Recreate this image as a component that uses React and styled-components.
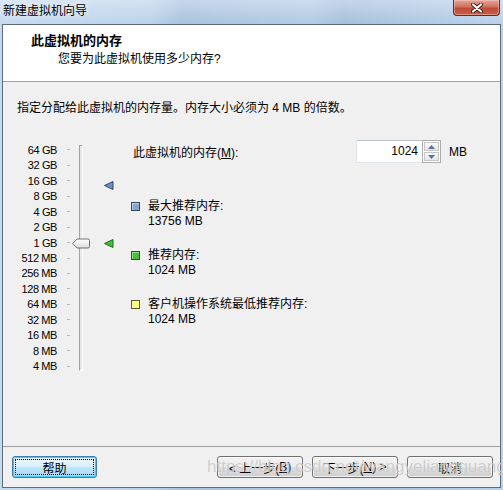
import React from "react"
import styled, { createGlobalStyle } from "styled-components"

const GlobalStyle = createGlobalStyle`
  html, body {
    margin: 0;
    padding: 0;
    background: #c3d7ee;
  }
  body {
    font-family: "Liberation Sans", "Noto Sans CJK SC", sans-serif;
    font-size: 12px;
    color: #000;
  }
`

const ROW_H = 15.45
const SCALE = ["64 GB", "32 GB", "16 GB", "8 GB", "4 GB", "2 GB", "1 GB", "512 MB", "256 MB", "128 MB", "64 MB", "32 MB", "16 MB", "8 MB", "4 MB"]
const FIRST = 10
const posOf = mb => FIRST + Math.log2(65536 / mb) * ROW_H

const legend = [
  { color: "#8aa5cd", border: "#33475f", label: "最大推荐内存:", value: "13756 MB" },
  { color: "#45c23a", border: "#1f5a1a", label: "推荐内存:", value: "1024 MB" },
  { color: "#ffff78", border: "#5c5c2a", label: "客户机操作系统最低推荐内存:", value: "1024 MB" },
]

const App = () => {
  return (
    <>
      <GlobalStyle />
      <Window>
        <TitleBar>
          <span className="caption">新建虚拟机向导</span>
          <CloseButton>
            <svg width="12" height="10" viewBox="0 0 12 10">
              <path d="M2 1.5 L10 8.5 M10 1.5 L2 8.5" stroke="#3b1c18" strokeWidth="4" strokeLinecap="round" />
              <path d="M2 1.5 L10 8.5 M10 1.5 L2 8.5" stroke="#fff" strokeWidth="2.2" strokeLinecap="round" />
            </svg>
          </CloseButton>
        </TitleBar>

        <Client>
          <Header>
            <h1>此虚拟机的内存</h1>
            <p>您要为此虚拟机使用多少内存?</p>
          </Header>

          <Body>
            <Intro>指定分配给此虚拟机的内存量。内存大小必须为 4 MB 的倍数。</Intro>
            <Main>
              <Scale>
                <Labels>
                  {SCALE.map(s => (
                    <ScaleRow key={s}>
                      <span>{s}</span>
                      <Tick />
                    </ScaleRow>
                  ))}
                </Labels>
                <TrackCol>
                  <Groove />
                  <Thumb style={{ top: posOf(1024) - 5 }}>
                    <svg width="18" height="11" viewBox="0 0 18 11">
                      <defs>
                        <linearGradient id="th" x1="0" y1="0" x2="0" y2="1">
                          <stop offset="0" stopColor="#ffffff" />
                          <stop offset="1" stopColor="#dcdcdc" />
                        </linearGradient>
                      </defs>
                      <path d="M0.5 5.5 L5 1 H16 Q17.5 1 17.5 2.5 V8.5 Q17.5 10 16 10 H5 Z" fill="url(#th)" stroke="#707070" />
                    </svg>
                  </Thumb>
                </TrackCol>
                <MarkerCol>
                  <Marker style={{ top: posOf(13756) - 4 }}>
                    <svg width="10" height="9" viewBox="0 0 10 9">
                      <path d="M0.5 4.5 L9 0.5 V8.5 Z" fill="#6f8fca" stroke="#2c4476" />
                    </svg>
                  </Marker>
                  <Marker style={{ top: posOf(1024) - 4 }}>
                    <svg width="10" height="9" viewBox="0 0 10 9">
                      <path d="M0.5 4.5 L9 0.5 V8.5 Z" fill="#3fc23a" stroke="#1d6a18" />
                    </svg>
                  </Marker>
                </MarkerCol>
              </Scale>

              <Panel>
                <MemRow>
                  <label>
                    此虚拟机的内存(<u>M</u>):
                  </label>
                  <SpinBox>
                    <SpinField>1024</SpinField>
                    <SpinButtons>
                      <SpinBtn $up>
                        <svg width="7" height="4" viewBox="0 0 7 4">
                          <path d="M0 4 L3.5 0 L7 4 Z" fill="#5e6f9a" />
                        </svg>
                      </SpinBtn>
                      <SpinBtn>
                        <svg width="7" height="4" viewBox="0 0 7 4">
                          <path d="M0 0 L3.5 4 L7 0 Z" fill="#5e6f9a" />
                        </svg>
                      </SpinBtn>
                    </SpinButtons>
                  </SpinBox>
                  <span className="unit">MB</span>
                </MemRow>

                <Legend>
                  {legend.map(l => (
                    <LegendItem key={l.label}>
                      <Swatch $color={l.color} $border={l.border} />
                      <div>
                        <div>{l.label}</div>
                        <div>{l.value}</div>
                      </div>
                    </LegendItem>
                  ))}
                </Legend>
              </Panel>
            </Main>
          </Body>

          <Footer>
            <Button $focused>帮助</Button>
            <div className="nav">
              <Button>&lt; 上一步(<u>B</u>)</Button>
              <Button>下一步(<u>N</u>) &gt;</Button>
              <Button>取消</Button>
            </div>
            <Watermark>https://blog.csdn.net/wangyeliangguang</Watermark>
          </Footer>
        </Client>
      </Window>
    </>
  )
}

export default App

const Window = styled.div`
  width: 503px;
  height: 490px;
  display: flex;
  flex-direction: column;
  background:
    linear-gradient(180deg, rgba(255, 255, 255, 0.35) 0%, rgba(255, 255, 255, 0) 24px),
    linear-gradient(90deg, #c6d9ee 0%, #bcd2ea 30%, #a9c2de 36%, #b3cae5 62%, #a6bfdc 68%, #bad1ea 100%);
  overflow: hidden;
`

const TitleBar = styled.div`
  height: 24px;
  flex: none;
  display: flex;
  justify-content: space-between;
  align-items: flex-start;
  padding: 0 3px 0 3px;

  .caption {
    line-height: 22px;
    font-size: 12px;
    color: #000;
    text-shadow: 0 0 6px rgba(255, 255, 255, 0.9);
  }
`

const CloseButton = styled.div`
  width: 45px;
  height: 15px;
  display: flex;
  align-items: center;
  justify-content: center;
  border: 1px solid #5a2f2a;
  border-top: none;
  border-radius: 0 0 4px 4px;
  background: linear-gradient(180deg, #e3a79a 0%, #d0705e 45%, #c04a35 55%, #c8604a 100%);
  box-shadow: inset 0 0 0 1px rgba(255, 210, 200, 0.45);
`

const Client = styled.div`
  flex: 1;
  margin: 0 2px 2px 2px;
  border: 1px solid #5d6b7d;
  background: #f0f0f0;
  display: flex;
  flex-direction: column;
`

const Header = styled.div`
  height: 57px;
  box-sizing: border-box;
  flex: none;
  background: #fff;
  border-bottom: 1px solid #a0a0a0;
  padding: 8px 0 0 28px;

  h1 {
    margin: 0;
    font-size: 13px;
    font-weight: bold;
    line-height: 16px;
  }

  p {
    margin: 2px 0 0 27px;
    line-height: 16px;
  }
`

const Body = styled.div`
  flex: 1;
  padding: 18px 0 0 14px;
`

const Intro = styled.div`
  line-height: 16px;
`

const Main = styled.div`
  display: flex;
  margin-top: 24px;
`

const Scale = styled.div`
  display: flex;
`

const Labels = styled.div`
  padding-top: ${FIRST - ROW_H / 2}px;
`

const ScaleRow = styled.div`
  height: ${ROW_H}px;
  display: grid;
  grid-template-columns: 40px 3px;
  column-gap: 10px;
  align-items: center;

  span {
    text-align: right;
    font-size: 11px;
    letter-spacing: -0.4px;
    white-space: nowrap;
  }
`

const Tick = styled.div`
  height: 1px;
  background: #b8b8b8;
`

const TrackCol = styled.div`
  position: relative;
  width: 18px;
  margin-left: 2px;
`

const Groove = styled.div`
  width: 2px;
  height: 224px;
  margin: 5px 0 0 7px;
  background: #e8e8e8;
  border-left: 1px solid #a2a2a2;
  border-top: 1px solid #a2a2a2;
  border-right: 1px solid #ffffff;
  border-bottom: 1px solid #ffffff;
`

const Thumb = styled.div`
  position: absolute;
  left: 0;
  height: 11px;

  svg {
    display: block;
  }
`

const MarkerCol = styled.div`
  position: relative;
  width: 10px;
  margin-left: 14px;
`

const Marker = styled.div`
  position: absolute;
  left: 0;

  svg {
    display: block;
  }
`

const Panel = styled.div`
  margin-left: 17px;
  display: flex;
  flex-direction: column;
`

const MemRow = styled.div`
  display: grid;
  grid-template-columns: 225px 85px auto;
  align-items: center;
  height: 23px;

  label {
    padding-left: 2px;
  }

  .unit {
    margin-left: 8px;
  }
`

const SpinBox = styled.div`
  display: flex;
  height: 23px;
`

const SpinField = styled.div`
  flex: 1;
  background: #fff;
  border: 1px solid #dfe4ea;
  border-top-color: #bcc3cb;
  border-right: none;
  border-radius: 2px 0 0 2px;
  text-align: right;
  padding-right: 4px;
  line-height: 21px;
`

const SpinButtons = styled.div`
  width: 17px;
  display: flex;
  flex-direction: column;
  border: 1px solid #acacac;
  background: #fff;
`

const SpinBtn = styled.div`
  flex: 1;
  display: flex;
  align-items: center;
  justify-content: center;
  margin: 1px;
  ${p => (p.$up ? "margin-bottom: 0;" : "")}
  border: 1px solid #c6c6c6;
  background: linear-gradient(180deg, #fafafa 0%, #e6e6e6 100%);

  svg {
    display: block;
  }
`

const Legend = styled.div`
  margin-top: 36px;
  display: flex;
  flex-direction: column;
  gap: 19px;
`

const LegendItem = styled.div`
  display: grid;
  grid-template-columns: 9px auto;
  column-gap: 8px;
  line-height: 15px;
`

const Swatch = styled.div`
  width: 7px;
  height: 7px;
  margin-top: 3px;
  background: ${p => p.$color};
  border: 1px solid ${p => p.$border};
  box-shadow: inset 1px 1px 0 rgba(255, 255, 255, 0.45);
`

const Footer = styled.div`
  position: relative;
  height: 31px;
  flex: none;
  border-top: 1px solid #a0a0a0;
  padding: 9px 7px 0 9px;
  display: flex;
  justify-content: space-between;
  align-items: flex-start;

  .nav {
    display: flex;
    gap: 9px;
  }
`

const Button = styled.div`
  width: ${p => (p.$focused ? "85px" : "86px")};
  height: 22px;
  box-sizing: border-box;
  display: flex;
  align-items: center;
  justify-content: center;
  border-radius: 3px;
  border: 1px solid ${p => (p.$focused ? "#3c7fb1" : "#707070")};
  background: ${p =>
    p.$focused
      ? "linear-gradient(180deg, #eaf6fd 0%, #d9f0fc 50%, #bee6fd 50%, #a7d9f5 100%)"
      : "linear-gradient(180deg, #f2f2f2 0%, #ebebeb 50%, #dddddd 50%, #cfcfcf 100%)"};
  box-shadow: ${p =>
    p.$focused
      ? "inset 0 0 0 1px #48c6f7"
      : "inset 0 0 0 1px rgba(255, 255, 255, 0.7)"};
  outline: ${p => (p.$focused ? "1px dotted #000" : "none")};
  outline-offset: -4px;
  white-space: nowrap;
`

const Watermark = styled.div`
  position: absolute;
  left: 204px;
  top: 10px;
  font-size: 17px;
  line-height: 20px;
  color: rgba(165, 165, 165, 0.55);
  text-shadow: 0 0 1px rgba(255, 255, 255, 0.9);
  pointer-events: none;
  white-space: nowrap;
`
